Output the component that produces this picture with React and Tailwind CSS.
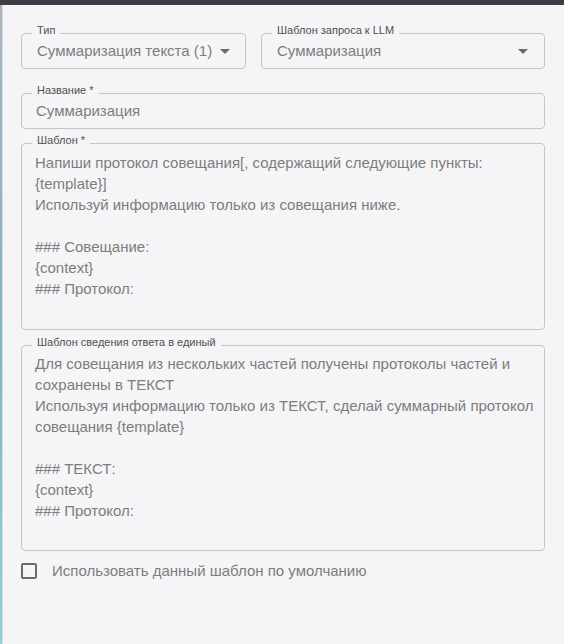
import React from "react";

const Field = ({ label, className = "", children }) => (
  <div className={`relative rounded-[4px] border border-[#c6c6c8] ${className}`}>
    <span className="absolute -top-[10px] left-[10px] bg-[#f5f5f7] px-[5px] text-[11px] leading-[13px] text-[#505050] whitespace-nowrap">
      {label}
    </span>
    {children}
  </div>
);

const Arrow = () => (
  <svg width="10" height="5" viewBox="0 0 10 5" className="shrink-0">
    <path d="M0 0 L10 0 L5 5 Z" fill="#6b6b6b" />
  </svg>
);

const Lines = ({ lines }) => (
  <div className="text-[15px] leading-[21px] text-[#7d7d7d]">
    {lines.map((l, i) => (
      <div key={i} className="whitespace-nowrap h-[21px]">
        {l}
      </div>
    ))}
  </div>
);

const template1 = [
  "Напиши протокол совещания[, содержащий следующие пункты:",
  "{template}]",
  "Используй информацию только из совещания ниже.",
  "",
  "### Совещание:",
  "{context}",
  "### Протокол:",
];

const template2 = [
  "Для совещания из нескольких частей получены протоколы частей и",
  "сохранены в ТЕКСТ",
  "Используя информацию только из ТЕКСТ, сделай суммарный протокол",
  "совещания {template}",
  "",
  "### ТЕКСТ:",
  "{context}",
  "### Протокол:",
];

export default function App() {
  return (
    <div className="min-h-screen bg-[#f5f5f7] flex flex-col font-['Liberation_Sans',Arial,sans-serif]">
      <div className="h-[5px] bg-[#3d3d48]" />
      <div className="flex flex-1">
        <div className="w-[3px] bg-gradient-to-b from-[#aab4bd] via-[#7fb3c6] to-[#8fd0dc] border-r border-[#d9dde0]" />
        <div className="flex-1 min-w-0 pl-[18px] pr-[19px] pt-[28px]">
          <div className="flex gap-[15px]">
            <Field label="Тип" className="w-[225px] shrink-0 h-[36px]">
              <div className="flex h-full items-center justify-between pl-[15px] pr-[15px] text-[15px] text-[#7d7d7d]">
                <span className="whitespace-nowrap">Суммаризация текста (1)</span>
                <Arrow />
              </div>
            </Field>
            <Field label="Шаблон запроса к LLM" className="flex-1 min-w-0 h-[36px]">
              <div className="flex h-full items-center justify-between pl-[15px] pr-[16px] text-[15px] text-[#7d7d7d]">
                <span>Суммаризация</span>
                <Arrow />
              </div>
            </Field>
          </div>

          <Field label="Название *" className="mt-[24px] h-[36px]">
            <div className="flex h-full items-center pl-[14px] text-[15px] text-[#7d7d7d]">
              Суммаризация
            </div>
          </Field>

          <Field label="Шаблон *" className="mt-[14px] h-[187px]">
            <div className="pl-[13px] pt-[8px]">
              <Lines lines={template1} />
            </div>
          </Field>

          <Field label="Шаблон сведения ответа в единый" className="mt-[15px] h-[206px]">
            <div className="pl-[13px] pt-[7px]">
              <Lines lines={template2} />
            </div>
          </Field>

          <div className="mt-[9px] flex items-center gap-[15px]">
            <div className="h-[16px] w-[16px] rounded-[2px] border-2 border-[#6b6b6b]" />
            <span className="text-[15px] text-[#7d7d7d]">Использовать данный шаблон по умолчанию</span>
          </div>
        </div>
      </div>
    </div>
  );
}
